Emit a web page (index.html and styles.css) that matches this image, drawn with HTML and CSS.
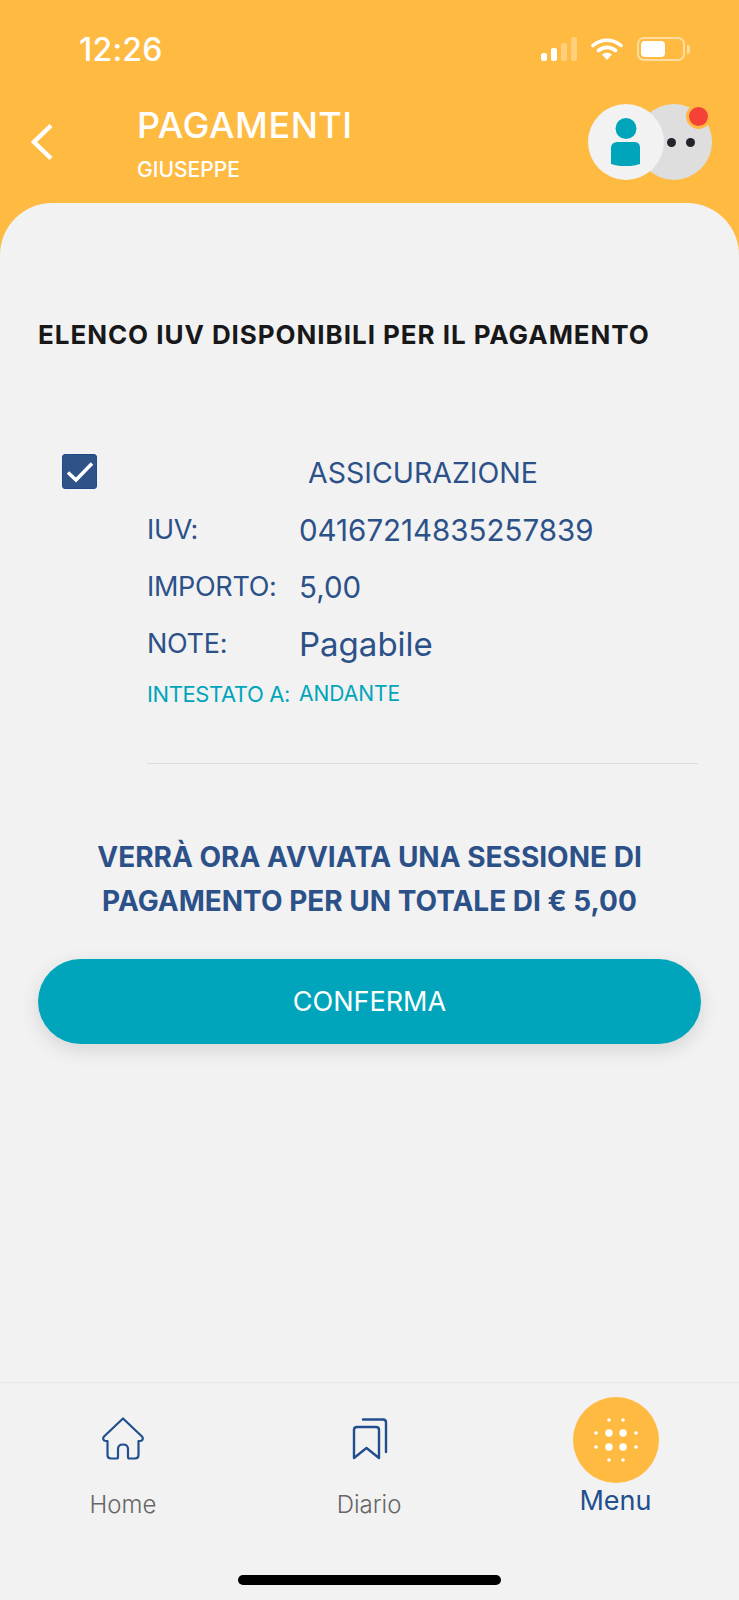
FILE: index.html
```html
<!DOCTYPE html>
<html lang="it">
<head>
  <meta charset="UTF-8">
  <meta name="viewport" content="width=device-width, initial-scale=1.0">
  <title>Pagamenti</title>
  <link rel="stylesheet" href="styles.css">
</head>
<body>
  <div class="app">
    <header class="top">
      <div class="status">
        <span class="time">12:26</span>
        <div class="status-icons">
          <div class="signal">
            <i class="bar b1"></i><i class="bar b2"></i><i class="bar b3 dim"></i><i class="bar b4 dim"></i>
          </div>
          <svg class="wifi" width="32" height="24" viewBox="0 0 32 24">
            <path d="M2 8.500C10 1.500 22 1.500 30 8.500" fill="none" stroke="#fff" stroke-width="3.600" stroke-linecap="round"/>
            <path d="M7.500 13.500C12.500 9.300 19.500 9.300 24.500 13.500" fill="none" stroke="#fff" stroke-width="3.600" stroke-linecap="round"/>
            <path d="M11 17.500C14 15 18 15 21 17.500L16 23Z" fill="#fff"/>
          </svg>
          <div class="battery"><div class="battery-fill"></div></div>
          <div class="battery-tip"></div>
        </div>
      </div>
      <div class="title-row">
        <svg class="back" width="24" height="38" viewBox="0 0 24 38">
          <path d="M21 2.500L4 19L21 35.500" fill="none" stroke="#fff" stroke-width="4.500"/>
        </svg>
        <div class="titles">
          <div class="title">PAGAMENTI</div>
          <div class="subtitle">GIUSEPPE</div>
        </div>
        <div class="avatars">
          <div class="avatar-more"><i class="dot"></i><i class="dot"></i></div>
          <div class="avatar-user">
            <svg width="30" height="48" viewBox="0 0 30 48">
              <circle cx="15" cy="10.500" r="10.500" fill="#00a5bb"/>
              <path d="M0 30C0 26 3 24 7 24H23C27 24 29 26 29 30V46C20 49 9 49 0 46Z" fill="#00a5bb"/>
            </svg>
          </div>
          <div class="notif"></div>
        </div>
      </div>
    </header>

    <main class="sheet">
      <h1 class="heading">ELENCO IUV DISPONIBILI PER IL PAGAMENTO</h1>

      <section class="item">
        <div class="check">
          <svg width="28" height="24" viewBox="0 0 28 24">
            <path d="M2 12.500L10 20L26 3.500" fill="none" stroke="#fff" stroke-width="3.500"/>
          </svg>
        </div>
        <div class="details">
          <div class="item-name">ASSICURAZIONE</div>
          <div class="row"><span class="label">IUV:</span><span class="value">04167214835257839</span></div>
          <div class="row"><span class="label">IMPORTO:</span><span class="value">5,00</span></div>
          <div class="row"><span class="label">NOTE:</span><span class="value note">Pagabile</span></div>
          <div class="row small"><span class="label">INTESTATO A:</span><span class="value">ANDANTE</span></div>
        </div>
      </section>
      <div class="divider"></div>

      <p class="summary">VERRÀ ORA AVVIATA UNA SESSIONE DI<br>PAGAMENTO PER UN TOTALE DI € 5,00</p>
      <button class="confirm">CONFERMA</button>
    </main>

    <nav class="tabs">
      <div class="tab">
        <svg width="46" height="46" viewBox="0 0 46 46">
          <path d="M23 2.500L42 20.500C43.500 22 43 25 40 25H38.500V39C38.500 41.500 37.500 42.500 35 42.500H29.500C28.500 42.500 28 42 28 41V33C28 30 26 28.500 23 28.500C20 28.500 18 30 18 33V41C18 42 17.500 42.500 16.500 42.500H11C8.500 42.500 7.500 41.500 7.500 39V25H6C3 25 2.500 22 4 20.500Z" fill="none" stroke="#214f8e" stroke-width="2.200" stroke-linejoin="round"/>
        </svg>
        <span class="tab-label">Home</span>
      </div>
      <div class="tab">
        <svg width="46" height="46" viewBox="0 0 46 46">
          <path d="M8 42V14C8 12 9 11 11 11H30C32 11 33 12 33 14V42L20.500 32Z" fill="none" stroke="#214f8e" stroke-width="2.400" stroke-linejoin="round"/>
          <path d="M17 3.500H37C39 3.500 40 4.500 40 6.500V36" fill="none" stroke="#214f8e" stroke-width="2.400" stroke-linecap="round"/>
        </svg>
        <span class="tab-label">Diario</span>
      </div>
      <div class="tab active">
        <div class="menu-btn">
          <svg width="46" height="46" viewBox="0 0 46 46" fill="#fff">
            <circle cx="16" cy="3" r="1.800"/><circle cx="30" cy="3" r="1.800"/>
            <circle cx="3" cy="16" r="1.800"/><circle cx="16" cy="16" r="3.700"/><circle cx="30" cy="16" r="3.700"/><circle cx="43" cy="16" r="1.800"/>
            <circle cx="3" cy="30" r="1.800"/><circle cx="16" cy="30" r="3.700"/><circle cx="30" cy="30" r="3.700"/><circle cx="43" cy="30" r="1.800"/>
            <circle cx="16" cy="43" r="1.800"/><circle cx="30" cy="43" r="1.800"/>
          </svg>
        </div>
        <span class="tab-label">Menu</span>
      </div>
    </nav>
    <div class="home-bar"><div class="home-indicator"></div></div>
  </div>
</body>
</html>
```

FILE: styles.css
```css
* {
  box-sizing: border-box;
}
body {
  margin: 0;
  background: #f2f2f2;
  font-family: Inter, "Open Sans", sans-serif;
  color: #2c5188;
}
.app {
  width: 739px;
  height: 1600px;
  display: flex;
  flex-direction: column;
  background: #ffba42;
  overflow: hidden;
}

/* header */
.top {
  height: 203px;
  flex-shrink: 0;
  color: #fff;
}
.status {
  height: 100px;
  padding: 31px 49px 0 79px;
  display: flex;
  justify-content: space-between;
  align-items: flex-start;
}
.time {
  font-size: 32px;
  line-height: 37px;
  font-weight: 500;
  letter-spacing: 0.2px;
}
.status-icons {
  display: flex;
  align-items: center;
  padding-top: 6px;
}
.signal {
  display: flex;
  align-items: flex-end;
  gap: 4px;
  height: 24px;
  margin-right: 14px;
}
.bar {
  width: 6px;
  border-radius: 2px;
  background: #fff;
}
.bar.dim {
  background: rgba(255, 255, 255, 0.3);
}
.b1 { height: 8px; }
.b2 { height: 13px; }
.b3 { height: 18px; }
.b4 { height: 24px; }
.wifi {
  margin-right: 14px;
}
.battery {
  width: 48px;
  height: 24px;
  border: 2px solid rgba(255, 255, 255, 0.5);
  border-radius: 7px;
  padding: 2px;
}
.battery-fill {
  width: 24px;
  height: 100%;
  background: #fff;
  border-radius: 4px;
}
.battery-tip {
  width: 3px;
  height: 9px;
  margin-left: 2px;
  border-radius: 0 3px 3px 0;
  background: rgba(255, 255, 255, 0.5);
}
.title-row {
  display: flex;
  align-items: flex-start;
  padding-left: 30px;
  height: 103px;
}
.back {
  margin-top: 23px;
  flex-shrink: 0;
}
.titles {
  margin-left: 83px;
  padding-top: 2px;
}
.title {
  font-size: 36px;
  line-height: 46px;
  font-weight: 500;
  letter-spacing: 0.5px;
}
.subtitle {
  font-size: 21px;
  line-height: 26px;
  margin-top: 9px;
  font-weight: 500;
}
.avatars {
  position: relative;
  width: 124px;
  height: 76px;
  margin-left: auto;
  margin-right: 27px;
  margin-top: 4px;
}
.avatar-more {
  position: absolute;
  right: 0;
  top: 0;
  width: 76px;
  height: 76px;
  border-radius: 50%;
  background: #dedede;
  display: flex;
  align-items: center;
  justify-content: center;
  gap: 10px;
  padding-left: 14px;
}
.dot {
  width: 9px;
  height: 9px;
  border-radius: 50%;
  background: #23232b;
}
.avatar-user {
  position: absolute;
  left: 0;
  top: 0;
  width: 76px;
  height: 76px;
  border-radius: 50%;
  background: #f2f2f2;
  display: flex;
  align-items: center;
  justify-content: center;
}
.notif {
  position: absolute;
  right: 1px;
  top: 0;
  width: 19px;
  height: 19px;
  border-radius: 50%;
  background: #f44336;
  border: 3px solid #ffb942;
  box-sizing: content-box;
}

/* content */
.sheet {
  flex: 1;
  background: #f2f2f2;
  border-radius: 52px 52px 0 0;
  padding: 115px 38px 0;
}
.heading {
  margin: 0;
  font-size: 26px;
  line-height: 34px;
  font-weight: 700;
  letter-spacing: 0.95px;
  color: #18181a;
}
.item {
  display: flex;
  margin-top: 99px;
  padding-left: 24px;
}
.check {
  width: 35px;
  height: 35px;
  flex-shrink: 0;
  margin-top: 3px;
  background: #2f5389;
  border: 1px solid #1e4a8a;
  border-radius: 3px;
  display: flex;
  align-items: center;
  justify-content: center;
}
.details {
  margin-left: 50px;
  flex: 1;
  padding-top: 3px;
}
.item-name {
  font-size: 28.500px;
  line-height: 38px;
  padding-left: 161px;
  margin-bottom: 19px;
}
.row {
  display: flex;
  font-size: 29.500px;
  line-height: 38px;
  margin-bottom: 19px;
}
.label {
  width: 152px;
  flex-shrink: 0;
}
.row .label {
  font-size: 27px;
  letter-spacing: -0.3px;
}
.value.note {
  font-size: 33px;
}
.row.small {
  color: #00a5bb;
  font-size: 21px;
  line-height: 30px;
  margin-top: -3px;
  margin-bottom: 0;
}
.row.small .label {
  font-size: 22px;
  letter-spacing: -0.4px;
}
.divider {
  height: 1px;
  background: #dcdcdc;
  margin: 54px 3px 0 109px;
}
.summary {
  margin: 71px 0 0;
  text-align: center;
  font-size: 28px;
  line-height: 44px;
  font-weight: 700;
  color: #2c5188;
}
.confirm {
  display: block;
  width: 663px;
  height: 85px;
  margin-top: 36px;
  border: none;
  border-radius: 43px;
  background: #00a5bb;
  color: #fff;
  font-family: inherit;
  font-size: 27px;
  box-shadow: 0 6px 20px rgba(0, 0, 0, 0.12);
}

/* bottom nav */
.tabs {
  height: 193px;
  flex-shrink: 0;
  padding-top: 14px;
  background: #f2f2f2;
  border-top: 1px solid #e8e8e8;
  display: grid;
  grid-template-columns: 246px 246px 247px;
}
.tab {
  display: flex;
  flex-direction: column;
  align-items: center;
  padding-top: 19px;
}
.tab-label {
  margin-top: 28px;
  font-size: 24px;
  line-height: 30px;
  font-weight: 300;
  color: #666;
}
.tab.active {
  padding-top: 0;
}
.tab.active .tab-label {
  margin-top: 3px;
  font-size: 27px;
  font-weight: 400;
  color: #214f8e;
}
.menu-btn {
  width: 86px;
  height: 86px;
  border-radius: 50%;
  background: #ffba42;
  display: flex;
  align-items: center;
  justify-content: center;
}
.home-bar {
  height: 25px;
  flex-shrink: 0;
  background: #f2f2f2;
  display: flex;
  justify-content: center;
}
.home-indicator {
  width: 263px;
  height: 10px;
  background: #000;
  border-radius: 5px;
}
```
